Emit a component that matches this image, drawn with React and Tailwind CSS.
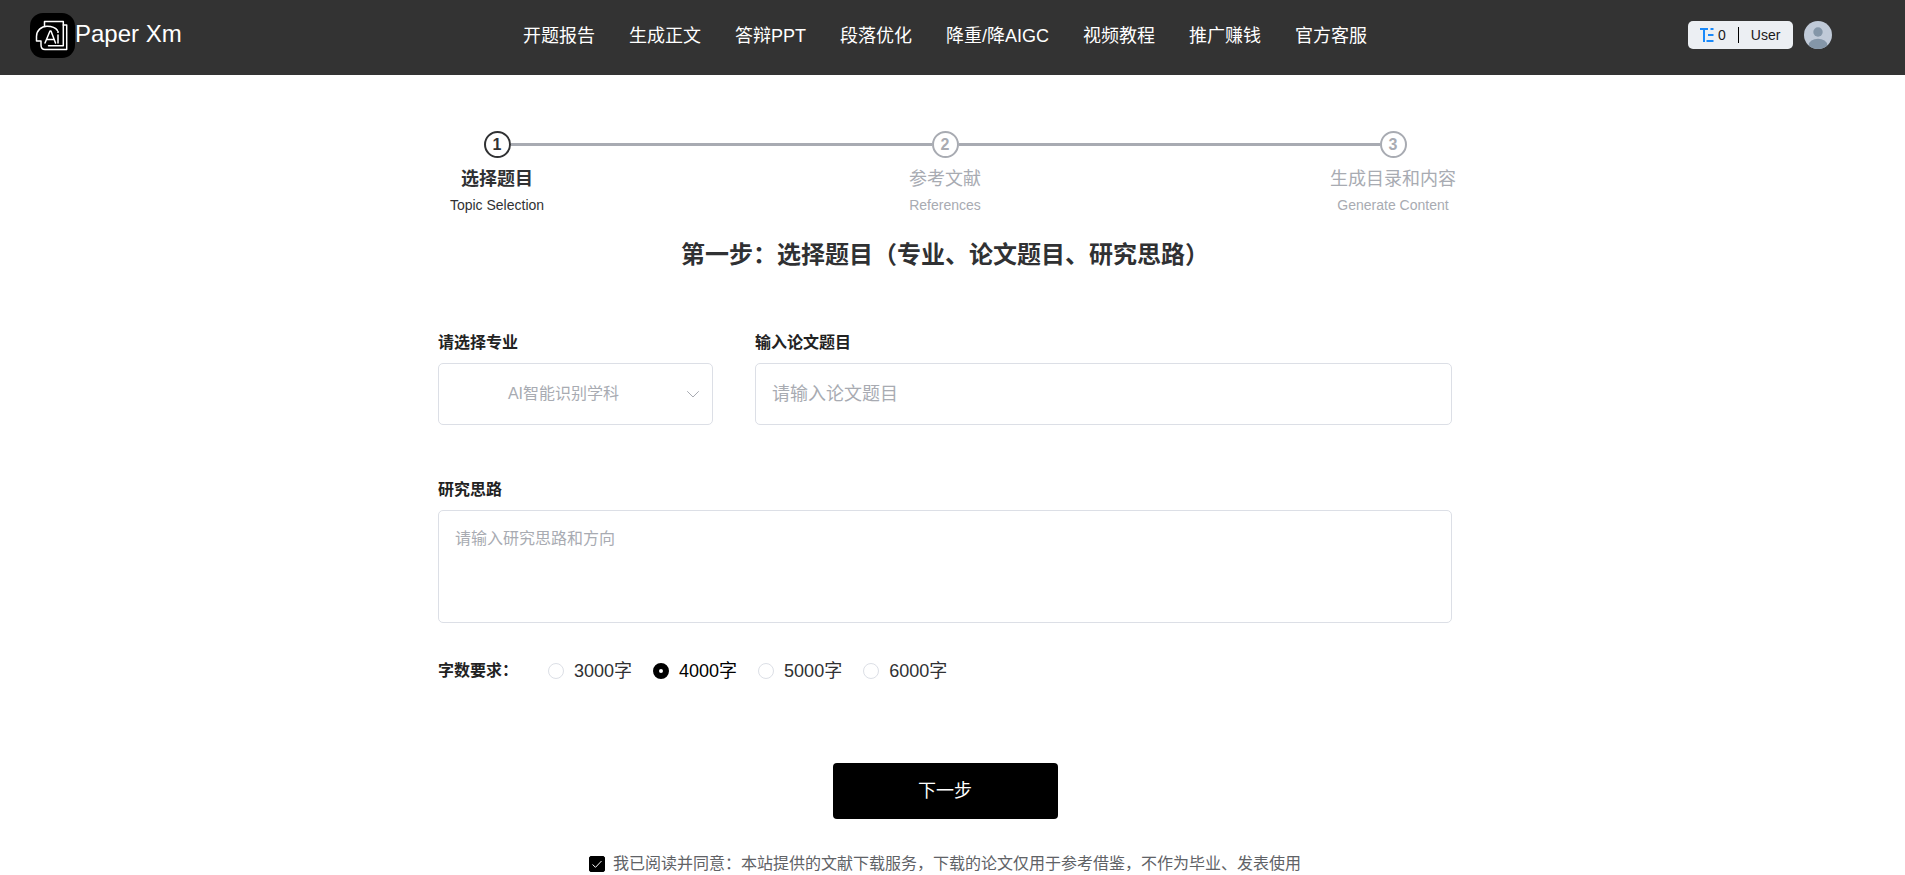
import { useState } from 'react';

const navItems = [
    { label: '开题报告', href: '#proposal' },
    { label: '生成正文', href: '#paper' },
    { label: '答辩PPT', href: '#ppt' },
    { label: '段落优化', href: '#optimize' },
    { label: '降重/降AIGC', href: '#reduce' },
    { label: '视频教程', href: '#tutorial' },
    { label: '推广赚钱', href: '#promote' },
    { label: '官方客服', href: '#service' },
];

const steps = [
    { title: '选择题目', description: 'Topic Selection' },
    { title: '参考文献', description: 'References' },
    { title: '生成目录和内容', description: 'Generate Content' },
];

const wordCounts = [3000, 4000, 5000, 6000];

const LogoIcon = () => (
    <svg viewBox="0 0 45 45" className="w-[45px] h-[45px]" fill="none" aria-hidden="true">
        <rect width="45" height="45" rx="13" fill="#000" />
        <g stroke="#fff" strokeWidth="1.5" strokeLinejoin="round" strokeLinecap="round">
            <path d="M14.5 13V8.5h18.8v24.2H18.5" />
            <path d="M33.3 12h3.4v24.5H15c-2.500 0-4-2-4-4.500V28H6.500v-4.500c0-6 4.700-10.200 10.500-10.200 4 0 8.500 1.200 10.500 4.200" />
            <path d="M15 30l5-12h1l4.500 12M17 26.500h7.300" />
            <path d="M28 22v8" />
        </g>
        <circle cx="28" cy="19" r="1" fill="#fff" />
    </svg>
);

const WordsIcon = () => (
    <svg viewBox="0 0 14 14" className="w-[14px] h-[14px]" fill="none" stroke="#1989fa" strokeWidth="2" aria-hidden="true">
        <path d="M0 1h8M4 1v13M10.500 1h3M8 7h5.500M6.500 13h7" />
    </svg>
);

const Avatar = () => (
    <svg viewBox="0 0 28 28" className="w-7 h-7 rounded-full" aria-hidden="true">
        <rect width="28" height="28" fill="#c0cad8" />
        <circle cx="14" cy="11" r="4.700" fill="#8496a8" />
        <ellipse cx="14" cy="24" rx="9.200" ry="6.200" fill="#8496a8" />
    </svg>
);

const Header = () => (
    <header className="bg-[#333333] h-[75px] pl-[30px] pr-[73px] pt-[13px] flex items-start justify-between text-white">
        <a href="#home" className="flex-1 flex items-center h-[45px] text-2xl">
            <LogoIcon />
            <span className="pb-1">Paper Xm</span>
        </a>
        <nav className="flex items-center gap-[34px] h-[45px] ml-7">
            {navItems.map((item) => (
                <a key={item.href} href={item.href} className="text-lg whitespace-nowrap">
                    {item.label}
                </a>
            ))}
        </nav>
        <div className="flex-1 flex items-center justify-end gap-[11px] h-11">
            <button type="button" className="h-7 w-[105px] rounded-[5px] bg-[#eceff3] text-[#1a1a1a] text-sm flex items-center pl-3">
                <WordsIcon />
                <span className="ml-1">0</span>
                <span className="ml-3 mr-3 w-px h-4 bg-black" />
                <span>User</span>
            </button>
            <button type="button" aria-label="User">
                <Avatar />
            </button>
        </div>
    </header>
);

const Steps = ({ current }) => (
    <ol className="w-full max-w-[1344px] mx-auto grid grid-cols-3">
        {steps.map((step, index) => {
            const active = index === current;
            return (
                <li key={step.title} className={active ? 'text-[#303133]' : 'text-[#a8abb2]'}>
                    <div className="flex items-center">
                        <span className={`flex-1 h-[3px] ${index > 0 ? 'bg-[#a8abb2]' : ''}`} />
                        <span className="w-[27px] h-[27px] rounded-full border-2 border-current flex items-center justify-center text-base font-bold">
                            {index + 1}
                        </span>
                        <span className={`flex-1 h-[3px] ${index < steps.length - 1 ? 'bg-[#a8abb2]' : ''}`} />
                    </div>
                    <p className={`mt-[5px] text-lg leading-8 text-center ${active ? 'font-bold' : ''}`}>{step.title}</p>
                    <p className="text-sm text-center">{step.description}</p>
                </li>
            );
        })}
    </ol>
);

const fieldStyle = 'w-full rounded-[5px] border border-[#dcdfe6] bg-white outline-none focus:border-black';
const labelStyle = 'block mb-2 text-base font-bold text-[#222222]';

const App = () => {
    const [words, setWords] = useState(4000);
    const [agreed, setAgreed] = useState(true);

    return (
        <div className="min-h-screen bg-white font-['Liberation_Sans','Noto_Sans_CJK_SC',sans-serif]">
            <Header />

            <main className="pt-14 pr-[15px]">
                <Steps current={0} />

                <h1 className="mt-5 text-2xl leading-10 font-bold text-center text-[#303133]">
                    第一步：选择题目（专业、论文题目、研究思路）
                </h1>

                <form className="w-full max-w-[1014px] mx-auto mt-14" onSubmit={(e) => e.preventDefault()}>
                    <div className="flex gap-[42px]">
                        <div className="w-[275px]">
                            <label htmlFor="major" className={labelStyle}>请选择专业</label>
                            <div className="relative">
                                <select
                                    id="major"
                                    className={`${fieldStyle} h-[62px] pl-3 pr-9 appearance-none text-base text-[#a8abb2] [text-align-last:center]`}
                                >
                                    <option>AI智能识别学科</option>
                                </select>
                                <svg
                                    viewBox="0 0 14 14"
                                    className="absolute right-[13px] top-6 w-[14px] h-[14px] pointer-events-none"
                                    fill="none"
                                    stroke="#a8abb2"
                                    strokeLinecap="round"
                                    strokeLinejoin="round"
                                >
                                    <path d="M1.500 4.500L7 10l5.500-5.500" />
                                </svg>
                            </div>
                        </div>
                        <div className="flex-1">
                            <label htmlFor="topic" className={labelStyle}>输入论文题目</label>
                            <input
                                id="topic"
                                type="text"
                                placeholder="请输入论文题目"
                                className={`${fieldStyle} h-[62px] px-4 text-lg placeholder:text-[#a8abb2]`}
                            />
                        </div>
                    </div>

                    <div className="mt-[53px]">
                        <label htmlFor="idea" className={labelStyle}>研究思路</label>
                        <textarea
                            id="idea"
                            placeholder="请输入研究思路和方向"
                            className={`${fieldStyle} block h-[113px] px-4 py-4 resize-none text-base placeholder:text-[#a8abb2]`}
                        />
                    </div>

                    <fieldset className="mt-[34px] flex items-center">
                        <legend className="float-left w-[110px] text-base font-bold text-[#222222]">字数要求：</legend>
                        <div className="flex gap-[21px]">
                            {wordCounts.map((count) => (
                                <label
                                    key={count}
                                    className={`flex items-center gap-[10px] text-lg ${words === count ? 'text-black' : 'text-[#303133]'}`}
                                >
                                    <input
                                        type="radio"
                                        name="words"
                                        value={count}
                                        checked={words === count}
                                        onChange={() => setWords(count)}
                                        className="appearance-none w-4 h-4 rounded-full border border-[#dcdfe6] checked:border-[6px] checked:border-black"
                                    />
                                    {count}字
                                </label>
                            ))}
                        </div>
                    </fieldset>

                    <button
                        type="submit"
                        className="block w-[225px] h-14 mt-[78px] mx-auto rounded bg-black text-white text-lg"
                    >
                        下一步
                    </button>

                    <label className="mt-[33px] flex items-center justify-center gap-2 text-base text-[#606266]">
                        <span className="relative w-4 h-4">
                            <input
                                type="checkbox"
                                checked={agreed}
                                onChange={(e) => setAgreed(e.target.checked)}
                                className="block appearance-none w-4 h-4 rounded-[2px] border border-[#dcdfe6] checked:bg-black checked:border-black"
                            />
                            {agreed && (
                                <svg viewBox="0 0 16 16" className="absolute inset-0 pointer-events-none" fill="none" stroke="#fff">
                                    <path d="M3.500 8.500l3 2.800 6-6.300" />
                                </svg>
                            )}
                        </span>
                        我已阅读并同意：本站提供的文献下载服务，下载的论文仅用于参考借鉴，不作为毕业、发表使用
                    </label>
                </form>
            </main>
        </div>
    );
};

export default App;
